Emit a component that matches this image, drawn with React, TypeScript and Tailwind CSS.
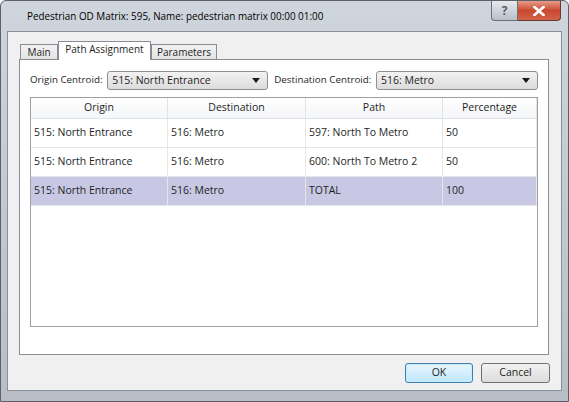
import React from "react";

const ROWS = [
  { origin: "515: North Entrance", dest: "516: Metro", path: "597: North To Metro", pct: "50" },
  { origin: "515: North Entrance", dest: "516: Metro", path: "600: North To Metro 2", pct: "50" },
  { origin: "515: North Entrance", dest: "516: Metro", path: "TOTAL", pct: "100", selected: true },
];

const COLS = ["w-[137px]", "w-[138px]", "w-[137px]", "flex-1"];

function Combo({ value, width }: { value: string; width: string }) {
  return (
    <div
      className={`${width} flex h-[19px] shrink-0 items-center justify-between rounded-[3px] border border-[#8e8f8f] bg-gradient-to-b from-[#f2f2f2] to-[#dcdcdc] pl-[4px] pr-[7px]`}
    >
      <span>{value}</span>
      <svg width="8" height="5" viewBox="0 0 8 5">
        <path d="M0 0 L8 0 L4 5 Z" fill="#1a1a1a" />
      </svg>
    </div>
  );
}

function Tab({ label, width, active }: { label: string; width: string; active?: boolean }) {
  if (active) {
    return (
      <div className={`${width} relative z-10 -mb-px flex h-[19px] items-center justify-center border border-b-0 border-[#898c95] bg-white pb-[3px] text-[10px]`}>
        {label}
      </div>
    );
  }
  return (
    <div className={`${width} mt-[3px] flex h-[15px] items-center justify-center border border-b-0 border-[#898c95] bg-gradient-to-b from-[#f2f2f2] to-[#e3e3e3] text-[10px]`}>
      {label}
    </div>
  );
}

export default function App() {
  return (
    <div
      className="relative flex h-[402px] w-[569px] flex-col whitespace-nowrap rounded-t-[6px] border border-[#5d6166] bg-gradient-to-b from-[#cfd5dc] to-[#b8bec6] text-[10.5px] text-[#1e1e1e]"
      style={{ fontFamily: '"Open Sans", "Noto Sans", sans-serif' }}
    >
      {/* title bar */}
      <div className="flex h-[30px] items-center pl-[26px] text-[9.9px] text-black">
        Pedestrian OD Matrix: 595, Name: pedestrian matrix 00:00 01:00
      </div>
      <div className="absolute right-[7px] top-0 flex h-[20px]">
        <div className="flex w-[27px] items-center justify-center rounded-bl-[4px] border border-t-0 border-[#6b7078] bg-gradient-to-b from-[#e6e9ed] to-[#b9c0c8] text-[12px] font-bold text-[#5a5f66]">
          ?
        </div>
        <div className="flex w-[43px] items-center justify-center rounded-br-[4px] border border-l-0 border-t-0 border-[#6b3a30] bg-gradient-to-b from-[#e89a8a] via-[#c9482f] to-[#d3624a]">
          <svg width="12" height="10" viewBox="0 0 12 10">
            <path d="M1.5 1 L10.5 9 M10.5 1 L1.5 9" stroke="white" strokeWidth="2.6" strokeLinecap="square" />
          </svg>
        </div>
      </div>

      {/* client area */}
      <div className="mx-[6px] mb-[10px] flex flex-1 flex-col border border-[#8a9099] bg-[#f0f0f0]">
        <div className="flex pl-[12px] pt-[9px]">
          <Tab label="Main" width="w-[38px]" />
          <Tab label="Path Assignment" width="w-[93px]" active />
          <Tab label="Parameters" width="w-[66px]" />
        </div>

        <div className="ml-[11px] mr-[12px] flex h-[296px] flex-col border border-[#898c95] bg-white px-[10px] pt-[11px]">
          <div className="flex items-center">
            <span className="w-[78px] text-[9.8px]">Origin Centroid:</span>
            <Combo value="515: North Entrance" width="w-[161px]" />
            <span className="ml-[6px] w-[103px] text-[9.8px]">Destination Centroid:</span>
            <Combo value="516: Metro" width="w-[162px]" />
          </div>

          <div className="mt-[7px] h-[230px] border border-[#a0a0a0] bg-white">
            <div className="flex h-[21px] bg-gradient-to-b from-white to-[#f4f5f7]">
              {["Origin", "Destination", "Path", "Percentage"].map((h, i) => (
                <div
                  key={h}
                  className={`${COLS[i]} flex items-center justify-center border-b border-r border-[#dfe2e6]`}
                >
                  {h}
                </div>
              ))}
            </div>
            {ROWS.map((r, idx) => (
              <div
                key={idx}
                className={`flex h-[29px] ${r.selected ? "bg-[#c9c8e4]" : ""}`}
              >
                {[r.origin, r.dest, r.path, r.pct].map((v, i) => (
                  <div
                    key={i}
                    className={`${COLS[i]} flex items-center border-b border-r border-[#e6e6e6] pl-[3px]`}
                  >
                    {v}
                  </div>
                ))}
              </div>
            ))}
          </div>
        </div>

        <div className="mr-[11px] mt-[8px] flex justify-end gap-[8px]">
          <button className="h-[20px] w-[68px] rounded-[3px] border border-[#3c7fb1] bg-gradient-to-b from-[#eaf6fd] to-[#bee6fd] shadow-[inset_0_0_0_1px_#c8ecfd]">
            OK
          </button>
          <button className="h-[20px] w-[69px] rounded-[3px] border border-[#707070] bg-gradient-to-b from-[#f2f2f2] to-[#dcdcdc]">
            Cancel
          </button>
        </div>
      </div>
    </div>
  );
}
